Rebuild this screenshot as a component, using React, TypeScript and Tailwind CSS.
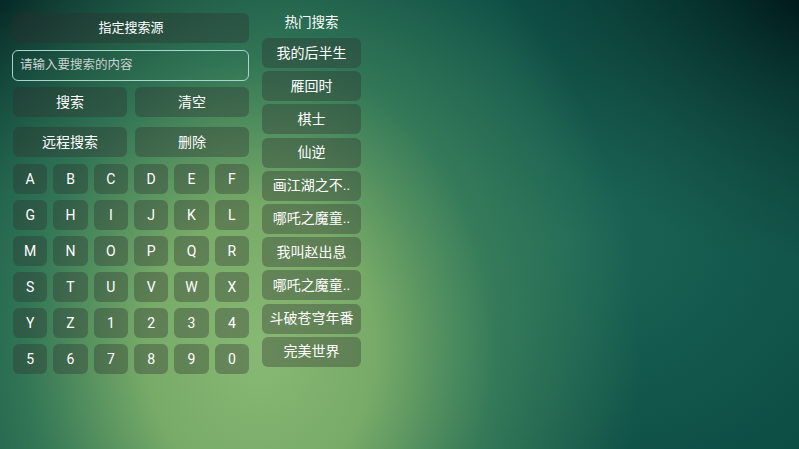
import React from 'react';

const keys = [
  'A', 'B', 'C', 'D', 'E', 'F',
  'G', 'H', 'I', 'J', 'K', 'L',
  'M', 'N', 'O', 'P', 'Q', 'R',
  'S', 'T', 'U', 'V', 'W', 'X',
  'Y', 'Z', '1', '2', '3', '4',
  '5', '6', '7', '8', '9', '0',
];

const hotList = [
  '我的后半生',
  '雁回时',
  '棋士',
  '仙逆',
  '画江湖之不..',
  '哪吒之魔童..',
  '我叫赵出息',
  '哪吒之魔童..',
  '斗破苍穹年番',
  '完美世界',
];

const btn =
  'flex items-center justify-center rounded-[6px] bg-[#2d2d2d]/35 text-white';

export default function App() {
  return (
    <div
      className="relative w-[799px] h-[449px] overflow-hidden bg-[#0a4a42] bg-[radial-gradient(ellipse_380px_470px_at_260px_350px,#88b974_0%,#78ab68_30%,rgba(66,136,94,0.7)_62%,rgba(40,110,88,0)_100%),radial-gradient(ellipse_380px_300px_at_570px_240px,rgba(32,106,90,0.85)_0%,rgba(32,106,90,0)_100%),radial-gradient(ellipse_300px_260px_at_800px_0px,#001a1a_0%,rgba(0,26,26,0)_100%),radial-gradient(ellipse_280px_200px_at_0px_0px,#072a27_0%,rgba(7,42,39,0)_100%)]"
      style={{ fontFamily: 'Roboto, "Noto Sans CJK SC", sans-serif' }}
    >
      <div className="flex gap-[13px] pl-[13px] pt-[13px]">
        {/* search panel */}
        <div className="flex flex-col w-[236px]">
          <div className={`${btn} h-[30px] text-[13px]`}>指定搜索源</div>
          <div className="mt-[7px] h-[31px] -ml-px w-[237px] flex items-center px-[7px] rounded-[6px] border border-[#a6d6cc] text-[12.5px] text-[#c9d3cf]">
            请输入要搜索的内容
          </div>
          <div className="mt-[6px] grid grid-cols-2 gap-x-[8px] gap-y-[10px] text-[14px]">
            <div className={`${btn} h-[30px]`}>搜索</div>
            <div className={`${btn} h-[30px]`}>清空</div>
            <div className={`${btn} h-[30px]`}>远程搜索</div>
            <div className={`${btn} h-[30px]`}>删除</div>
          </div>
          <div className="mt-[7px] grid grid-cols-6 gap-x-[6px] gap-y-[6px] text-[14px]">
            {keys.map((k) => (
              <div key={k} className={`${btn} h-[30px]`}>
                {k}
              </div>
            ))}
          </div>
        </div>

        {/* hot searches */}
        <div className="flex flex-col w-[99px]">
          <div className="h-[18px] flex items-center justify-center text-[13.5px] text-white">
            热门搜索
          </div>
          <div className="mt-[7px] flex flex-col gap-[3.2px] text-[14px]">
            {hotList.map((t, i) => (
              <div key={i} className={`${btn} h-[30px]`}>
                {t}
              </div>
            ))}
          </div>
        </div>
      </div>
    </div>
  );
}
